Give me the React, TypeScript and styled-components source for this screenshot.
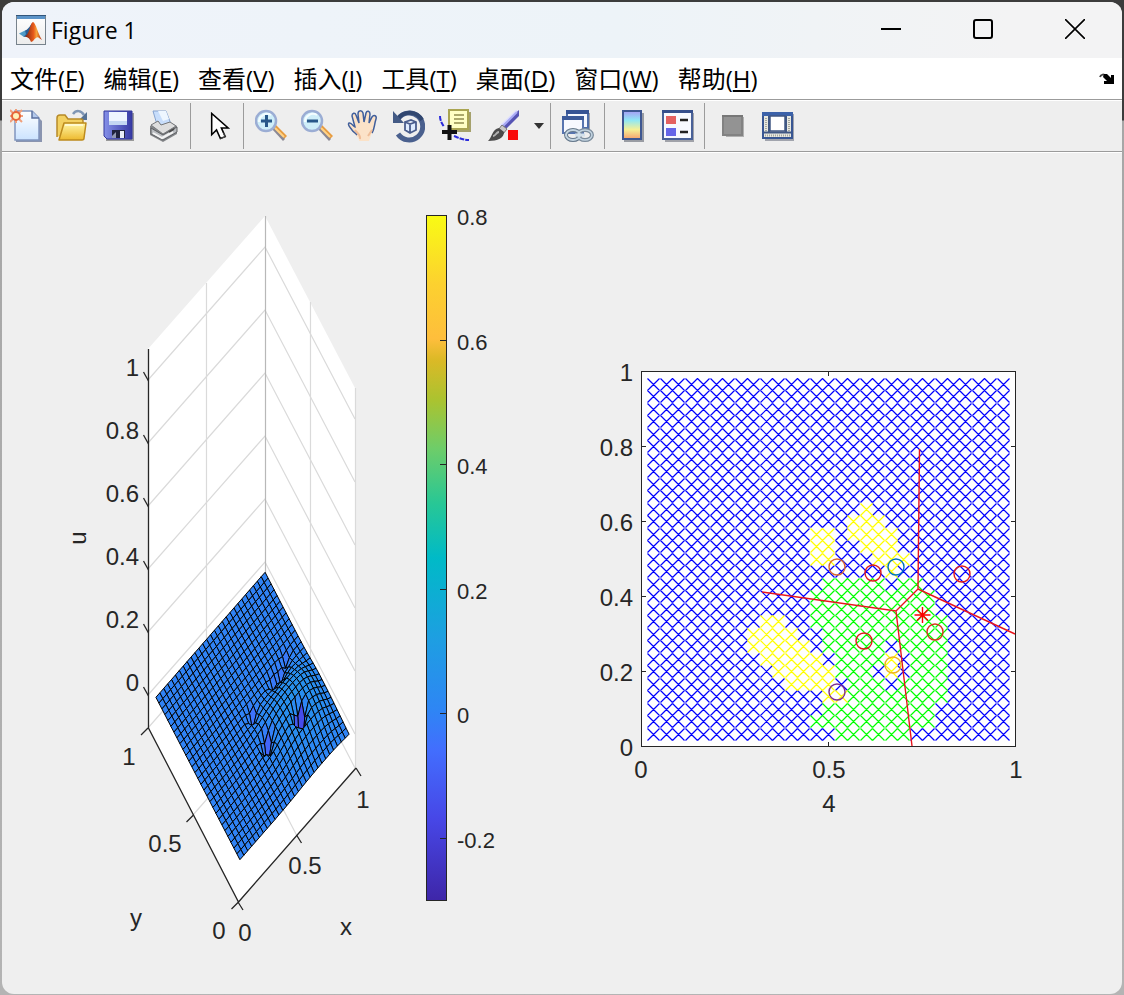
import React from "react";
import styled, { createGlobalStyle } from "styled-components";

const GlobalStyle = createGlobalStyle`
  * { box-sizing: border-box; }
  body {
    margin: 0;
    background: linear-gradient(#3c3c3c 0, #3c3c3c 120px, #a6a6a6 121px, #b4b4b4 100%);
    font-family: "Open Sans", "Noto Sans CJK SC", sans-serif;
    color: #000;
  }
`;

const Desktop = styled.div`
  min-height: 100vh;
  padding: 2px 2px 1px;
`;

const Window = styled.main`
  display: flex;
  flex-direction: column;
  overflow: hidden;
  min-height: calc(100vh - 3px);
  border-radius: 12px;
  background: #efefef;
`;

const TitleBar = styled.header`
  display: flex;
  align-items: center;
  height: 56px;
  padding: 0 1px 0 14px;
  background: linear-gradient(90deg, #eff3fa, #edf3f8 55%, #f3f3f4 90%);
`;

const Title = styled.h1`
  flex: 1;
  margin: 0 0 0 4px;
  font-size: 23px;
  line-height: 30px;
  font-weight: 400;
`;

const plainButton = `
  display: flex;
  align-items: center;
  justify-content: center;
  padding: 0;
  border: 0;
  background: none;
  color: inherit;
`;

const CaptionButton = styled.button`
  ${plainButton}
  width: 92px;
  height: 56px;
  padding-bottom: 2px;
`;

const MenuBar = styled.nav`
  display: flex;
  align-items: center;
  gap: 19px;
  height: 42px;
  padding: 0 7px 0 8px;
  background: #fff;
  border-bottom: 1px solid #9b9b9b;
`;

const MenuItem = styled.button`
  ${plainButton}
  display: block;
  font: 24px/34px "Open Sans", "Noto Sans CJK SC", sans-serif;
  white-space: nowrap;
`;

const DockButton = styled.button`
  ${plainButton}
  margin-left: auto;
`;

const ToolBar = styled.div`
  display: flex;
  align-items: center;
  height: 52px;
  background: #eee;
  border-top: 1px solid #fff;
  border-bottom: 1px solid #9b9b9b;
`;

const Group = styled.div<{ $first?: boolean; $tight?: boolean; $last?: boolean }>`
  display: flex;
  align-items: center;
  gap: 14px;
  height: 46px;
  padding: 0 ${(p) => (p.$tight ? 2 : 10)}px 0 ${(p) => (p.$first ? 8 : 11)}px;
  border-right: ${(p) => (p.$last ? "0" : "1px solid #9b9b9b")};
`;

const Tool = styled.button<{ $width?: number }>`
  ${plainButton}
  justify-content: flex-end;
  width: ${(p) => p.$width ?? 32}px;
  height: 34px;
`;

const Split = styled.div`
  display: flex;
`;

const DropButton = styled.button`
  ${plainButton}
  width: 28px;
  padding-left: 10px;
`;

const Figure = styled.section`
  display: grid;
  grid-template-columns: 550fr 570fr;
  border-top: 1px solid #fff;
`;

const Plot = styled.svg`
  display: block;
  width: 100%;
  font-family: "Liberation Sans", sans-serif;
  font-size: 24px;
  fill: #262626;
`;

/* ---------- icons ---------- */

const Icon = ({ children }: { children: React.ReactNode }) => (
  <svg width="32" height="34" viewBox="0 0 32 34" fill="none" aria-hidden="true">
    {children}
  </svg>
);

const MatlabIcon = () => (
  <svg width="31" height="31" viewBox="0 0 31 31" aria-hidden="true">
    <defs>
      <linearGradient id="logoPage" x2="0" y2="1">
        <stop stopColor="#fff" />
        <stop offset="1" stopColor="#ececec" />
      </linearGradient>
      <linearGradient id="logoPeak">
        <stop stopColor="#7b2312" />
        <stop offset=".5" stopColor="#e85a1c" />
        <stop offset=".68" stopColor="#f6a13a" />
        <stop offset="1" stopColor="#b52a12" />
      </linearGradient>
    </defs>
    <rect x=".5" y=".5" width="29" height="29" fill="url(#logoPage)" stroke="#77828c" />
    <path d="M1 1h28v3H1z" fill="#5b93c8" />
    <path d="M0 .5h30" stroke="#32557b" />
    <path d="M3 18.500l6-3 3 2 -4 4.500z" fill="#4f9bc7" />
    <path d="M9 15.500c4-1 5-6 8-8l-3 9-3 5-3.500.5 2.500-3z" fill="#285e96" />
    <path d="M17 7c3 1 5 12 9 18-3-2-4-4-6-2-2 1-3 4-5 4-1-3-3-5-6-5.500 5-3 5-14 8-14.500z" fill="url(#logoPeak)" />
  </svg>
);

const NewIcon = () => (
  <Icon>
    <defs>
      <linearGradient id="newPage" x2="0" y2="1">
        <stop stopColor="#fff" />
        <stop offset="1" stopColor="#cbe3ff" />
      </linearGradient>
    </defs>
    <path d="M6 4h18l8 8v21H6z" fill="#68769a" opacity=".75" />
    <path d="M5 2h17l7 7v22H5z" fill="url(#newPage)" stroke="#8095be" strokeWidth="1.500" />
    <path d="M22 2v7h7" fill="#b4c9ec" stroke="#5b709e" strokeWidth="1.500" />
    <path d="M0 1l12 12M12 1L0 13M6 0v14M0 7h13" stroke="#f0a07c" strokeWidth="2" />
    <circle cx="6" cy="7" r="4" fill="#fff2ba" stroke="#e6653a" strokeWidth="2" />
  </Icon>
);

const OpenIcon = () => (
  <Icon>
    <defs>
      <linearGradient id="folder" x2="0" y2="1">
        <stop stopColor="#fff6a6" />
        <stop offset="1" stopColor="#edb92e" />
      </linearGradient>
    </defs>
    <path d="M17 5c3-4 8-4 11 1" stroke="#7f96b5" strokeWidth="2.500" />
    <path d="M31 3v8h-8z" fill="#567295" />
    <path d="M1 28V9q0-3 3-3h5l3 4h13q2 0 2 2v6" fill="#f3d161" stroke="#b78a28" strokeWidth="1.500" />
    <path d="M8 14h22l-2 15q0 2-2 2H3z" fill="url(#folder)" stroke="#bd8b1d" strokeWidth="1.500" strokeLinejoin="round" />
    <path d="M9 16h18" stroke="#fffce0" strokeWidth="1.500" />
  </Icon>
);

const SaveIcon = () => (
  <Icon>
    <defs>
      <linearGradient id="disk">
        <stop stopColor="#8590e8" />
        <stop offset="1" stopColor="#3639a4" />
      </linearGradient>
    </defs>
    <path d="M4 4h28v28H4z" fill="#999" />
    <path d="M2 2h28v28H5l-3-3z" fill="url(#disk)" stroke="#35389c" />
    <path d="M7 3h18v12H7z" fill="#eef4ff" />
    <path d="M7 12h18v4H7z" fill="#c4d7f3" />
    <path d="M10 21h13v8H10z" fill="#20233f" />
    <path d="M18 22h4v7h-4z" fill="#e9edf8" />
    <path d="M10 27l4-4v6h-4z" fill="#929ab5" />
  </Icon>
);

const PrintIcon = () => (
  <Icon>
    <path d="M5 2h13l5 13-13 4z" fill="#c7ddfb" stroke="#86a3cf" />
    <path d="M10 2h8l3 8-6 2z" fill="#eef6ff" />
    <path d="M2 17l8-5 3 4 9-3 7 4v8L15 33 2 26z" fill="#85878a" />
    <path d="M3 16l7-4 3 4 9-3 6 4-13 8z" fill="#dedede" stroke="#77797c" />
    <path d="M3 19l12 7 14-8v5l-14 8-12-6z" fill="#b9bcc0" stroke="#5e6063" />
    <path d="M5 24l9 5 11-6" stroke="#f3f3f3" strokeWidth="2" />
    <path d="M21 23l5-3" stroke="#4b4b4b" strokeWidth="2" />
  </Icon>
);

const PointerIcon = () => (
  <Icon>
    <path
      d="M10 4v22l5-5 4 9 5-2-4-9h7z"
      fill="#fff"
      stroke="#000"
      strokeWidth="1.600"
    />
    <path d="M22 24l2 4-5 2" stroke="#555" />
  </Icon>
);

const ZoomIcon = ({ plus }: { plus?: boolean }) => (
  <Icon>
    <path d="M18 19l3-3 11 11-4 4z" fill="#e79b3f" />
    <path d="M17 20l2-1 11 11-2 2z" fill="#8c8994" />
    <path d="M20 19l9 9" stroke="#ffd286" strokeWidth="2" />
    <circle cx="11" cy="12" r="10" fill="#cfeef9" stroke="#9badd4" strokeWidth="2.500" />
    <path d="M4 13a8 8 0 0 1 12-7" stroke="#f4fdff" strokeWidth="2" />
    <path d="M6 12h11" stroke="#285789" strokeWidth="3" />
    {plus && <path d="M11.500 6v12" stroke="#285789" strokeWidth="3" />}
  </Icon>
);

const HandIcon = () => (
  <Icon>
    <path
      d="M12 32c0-5-5-6-7-10-2-3-5-6-3-8 3-1 4 4 6 4L5 7c0-3 3-4 4-1l3 8-1-9c0-4 4-4 5-1l1 9 2-9c1-3 4-2 4 1l-1 9 3-6c2-3 5-1 4 2-2 6-1 11-5 16l-2 6z"
      fill="#fbe2c8"
    />
    <path
      d="M10 26c-2-3-4-3-5-5-2-3-5-5-3-7 3-1 4 4 6 4L5 7c0-3 3-4 4-1l3 8-1-9c0-4 4-4 5-1l1 9 2-9c1-3 4-2 4 1l-1 9 3-6c2-3 5-1 4 2-2 6-1 9-4 14"
      stroke="#405f9c"
      strokeWidth="1.500"
    />
    <path d="M13 30c1-4-3-6-5-9M21 27l4-6" stroke="#efbd98" strokeWidth="2" />
  </Icon>
);

const RotateIcon = () => (
  <Icon>
    <path d="M5 10A13.500 13.500 0 1 1 5 25" stroke="#4a608e" strokeWidth="5" />
    <path d="M5 10A14 14 0 0 1 29 11" stroke="#30466f" strokeWidth="4" />
    <path d="M0 2v12h11z" fill="#435a85" />
    <path d="M12 13l6-2 5 2v8l-6 3-5-3zM12 13l5 2 6-2M17 15v8" fill="#dfecff" stroke="#4a5d8d" strokeWidth="1.800" />
  </Icon>
);

const DataTipIcon = () => (
  <Icon>
    <path d="M13 3h19v20H13z" fill="#a5a16c" />
    <path d="M10 1h19v19H10z" fill="#ffffc4" stroke="#aaa552" strokeWidth="2" />
    <path d="M15 6h10M15 10h10M15 14h10" stroke="#918d4e" strokeWidth="1.500" />
    <path d="M1 7c0 5 2 7 4 11M15 27c5 2 9 4 15 4" stroke="#2b2bdc" strokeWidth="2" strokeDasharray="5 1" />
    <path d="M3 23h15M10.500 16v15" stroke="#111" strokeWidth="4" />
  </Icon>
);

const BrushIcon = () => (
  <Icon>
    <path d="M30 1l-16 17-2-2L28 1z" fill="#dedfff" />
    <path d="M31 1v6L18 20l-4-3z" fill="#5654b4" />
    <path d="M29 3L15 17" stroke="#a9abf5" strokeWidth="2" />
    <path d="M14 16l5 4-4 5-5-4z" fill="#c8c8c8" stroke="#777" />
    <path d="M11 19l5 4c0 6-6 9-16 9 4-3 4-12 11-13z" fill="#4b4b4b" />
    <path d="M5 27c3 0 3-4 6-4" stroke="#b1b1b1" strokeWidth="2" />
    <path d="M20 21h10v10H20z" fill="#f90a0a" />
  </Icon>
);

const LinkIcon = () => (
  <Icon>
    <path d="M6 4h22v17H6z" fill="#9c9fa8" />
    <path d="M5 2h21v17H5z" fill="#f4f7ff" stroke="#4e6da9" strokeWidth="2" />
    <path d="M4 1h23v4H4z" fill="#355395" />
    <path d="M1 8h20v16H1z" fill="#f7f9ff" stroke="#5875b0" strokeWidth="2" />
    <path d="M0 7h22v4H0z" fill="#3b5999" />
    <ellipse cx="11" cy="26" rx="7" ry="5" stroke="#65788b" strokeWidth="4" />
    <ellipse cx="23" cy="26" rx="7" ry="5" stroke="#7b8c9c" strokeWidth="4" />
    <ellipse cx="11" cy="26" rx="7" ry="5" stroke="#c4d5e2" strokeWidth="2" />
    <ellipse cx="23" cy="26" rx="7" ry="5" stroke="#c4d5e2" strokeWidth="1.500" />
    <path d="M13 26h10" stroke="#d2e0ea" strokeWidth="3" />
  </Icon>
);

const ColorbarIcon = () => (
  <Icon>
    <defs>
      <linearGradient id="rainbow" x2="0" y2="1">
        <stop stopColor="#a69cf4" />
        <stop offset=".33" stopColor="#8fe8f5" />
        <stop offset=".66" stopColor="#f5f196" />
        <stop offset="1" stopColor="#f7a06e" />
      </linearGradient>
    </defs>
    <path d="M8 4h20v29H8z" fill="#999ca3" />
    <path d="M7 2h18v28H7z" fill="url(#rainbow)" stroke="#3e5792" strokeWidth="2" />
  </Icon>
);

const LegendIcon = () => (
  <Icon>
    <path d="M3 4h29v29H3z" fill="#a0a2a9" />
    <path d="M1 2h29v28H1z" fill="#f7f9ff" stroke="#496198" strokeWidth="2" />
    <path d="M0 1h31v3H0z" fill="#364f8c" />
    <path d="M4 7h10v8H4z" fill="#e46161" />
    <path d="M4 19h10v8H4z" fill="#6565e8" />
    <path d="M18 11h8M18 23h8" stroke="#222" strokeWidth="2.500" />
  </Icon>
);

const HideToolsIcon = () => (
  <Icon>
    <path d="M10 8h18v20H10z" fill="#b0b0b0" />
    <path d="M7 7h19v19H7z" fill="#939393" stroke="#828282" strokeWidth="2" />
    <path d="M6 7h21" stroke="#777" strokeWidth="2" />
  </Icon>
);

const DockToolsIcon = () => (
  <Icon>
    <path d="M3 5h29v27H3z" fill="#a1a4ad" />
    <path d="M1 4h29v25H1z" fill="#e8e8e0" stroke="#385693" strokeWidth="2" />
    <path d="M0 3h31v4H0z" fill="#3c62a9" />
    <path d="M7 7v16M24 7v16M2 23.500h27" stroke="#405783" strokeWidth="2" />
    <path d="M8 7h15v15H8z" fill="#fff" stroke="#405783" strokeWidth="1.500" />
    <path d="M4 9v14M27 9v14M3 26.500h25" stroke="#a5a79e" strokeWidth="2" strokeDasharray="1 1" />
  </Icon>
);

/* ---------- surface plot ---------- */

const PARULA: [number, number[]][] = [
  [0, [62, 38, 168]],
  [0.12, [71, 71, 231]],
  [0.22, [66, 110, 254]],
  [0.28, [46, 134, 244]],
  [0.38, [30, 158, 226]],
  [0.5, [0, 186, 199]],
  [0.58, [40, 199, 149]],
  [0.66, [110, 205, 105]],
  [0.73, [170, 195, 48]],
  [0.79, [220, 185, 38]],
  [0.82, [254, 190, 60]],
  [0.9, [252, 209, 47]],
  [1, [249, 251, 20]],
];

const rgb = (c: number[]) => `rgb(${c.map(Math.round).join(",")})`;

function parula(t: number) {
  const v = Math.max(0, Math.min(1, t));
  const k = Math.max(1, PARULA.findIndex(([s]) => s >= v));
  const [a, ca] = PARULA[k - 1];
  const [b, cb] = PARULA[k];
  const f = (v - a) / (b - a);
  return rgb(ca.map((c, i) => c + (cb[i] - c) * f));
}

const N = 30;
const gauss = (x: number, y: number, cx: number, cy: number, s: number) =>
  Math.exp(-((x - cx) ** 2 + (y - cy) ** 2) / (2 * s * s));
const step = (v: number, width: number) => 1 / (1 + Math.exp(-v / width));

/* Centre in grid steps, radius, depth. */
const PITS = [
  [22, 8, 0.019, 0.19],
  [21, 8, 0.016, 0.12],
  [15, 10, 0.022, 0.1],
  [15, 15, 0.02, 0.05],
  [21, 16, 0.022, 0.03],
  [23, 16, 0.022, 0.04],
  [25, 17, 0.022, 0.03],
];

function height(x: number, y: number) {
  const hill =
    0.06 * step(0.46 - y, 0.035) * step(y - 0.14, 0.06) * step(x - 0.55, 0.06) * step(0.91 - x, 0.035);
  return PITS.reduce((z, [i, j, s, a]) => z - a * gauss(x, y, i / N, j / N, s), hill);
}

const project = (x: number, y: number, z: number) => [
  239 + 117 * x - 90 * y,
  870 - 134 * x - 174 * y - 314 * z,
];

const faces: { points: string; fill: string }[] = [];
for (let s = 2 * N - 4; s >= 2; s--) {
  for (let i = 1; i < N - 1; i++) {
    const j = s - i;
    if (j < 1 || j >= N - 1) continue;
    const corners = [[i, j], [i + 1, j], [i + 1, j + 1], [i, j + 1]].map(([a, b]) => [a / N, b / N]);
    faces.push({
      points: corners.map(([x, y]) => project(x, y, height(x, y)).map((v) => v.toFixed(1)).join()).join(" "),
      fill: parula((height(corners[0][0], corners[0][1]) + 0.3) / 1.1),
    });
  }
}

const LEVELS = ["1", "0.8", "0.6", "0.4", "0.2", "0"];

const SurfacePlot = () => (
  <Plot viewBox="2 153 550 840" role="img" aria-label="Surface of u over x and y">
    <defs>
      <linearGradient id="parula" x1="0" y1="1" x2="0" y2="0">
        {PARULA.map(([s, c]) => (
          <stop key={s} offset={s} stopColor={rgb(c)} />
        ))}
      </linearGradient>
    </defs>
    <path d="M265 216L355 388V768L238 902L148 728V349Z" fill="#fff" />
    <g fill="none" stroke="#dadada" strokeWidth="1.200">
      {LEVELS.map((l, k) => (
        <path key={l} d={`M148 ${380 + 63 * k}L265 ${247 + 63 * k}L355 ${419 + 63 * k}`} />
      ))}
      <path d="M206.500 283V661L296.500 835M310.500 302V681L193 815M355.500 388V768M148 728L265 594L355 768" />
      <path d="M265.500 216V594" stroke="#b8b8b8" />
    </g>
    <g stroke="#000" strokeLinejoin="round">
      {faces.map((f, k) => (
        <polygon key={k} points={f.points} fill={f.fill} />
      ))}
    </g>
    <g fill="none" stroke="#262626" strokeWidth="1.300">
      <path d="M148.500 349V728L238.500 902L356 768" />
      {LEVELS.map((l, k) => (
        <path key={l} d={`M148.500 ${381 + 63 * k}l-5-9`} />
      ))}
      <path d="M148 728l-7 7M193.500 815l-7 7M238.500 902l-7 7M238 902l5 8M296.500 835l5 8M356 768l5 8" />
    </g>
    <g textAnchor="end">
      {LEVELS.map((l, k) => (
        <text key={l} x="139" y={376 + 63 * k}>{l}</text>
      ))}
    </g>
    <g textAnchor="middle">
      <text transform="translate(86 538) rotate(-90)">u</text>
      <text x="129" y="765">1</text>
      <text x="165" y="852">0.5</text>
      <text x="219" y="939">0</text>
      <text x="245" y="941">0</text>
      <text x="305" y="874">0.5</text>
      <text x="363" y="808">1</text>
      <text x="136" y="926">y</text>
      <text x="346" y="935">x</text>
    </g>
    <rect x="426.500" y="215.500" width="20" height="685" fill="url(#parula)" stroke="#262626" />
    <g fontSize="22">
      {["0.8", "0.6", "0.4", "0.2", "0", "-0.2"].map((l, k) => (
        <React.Fragment key={l}>
          <path d={`M440 ${Math.round(215 + 124.6 * k) + 0.5}h6`} stroke="#262626" />
          <text x="457" y={225 + Math.round(124.6 * k)}>{l}</text>
        </React.Fragment>
      ))}
    </g>
  </Plot>
);

/* ---------- scatter plot ---------- */

type Span = [number, number];
/* Column spans per grid row, counted from the bottom. */
const GREEN: Record<number, Span[]> = {
  1: [[16, 21]], 2: [[14, 23]], 3: [[15, 23]], 4: [[17, 24]],
  5: [[17, 19], [21, 24]], 6: [[16, 18], [22, 24]], 7: [[16, 19], [22, 24]],
  8: [[15, 19], [21, 24]], 9: [[15, 24]], 10: [[14, 24]], 11: [[14, 23]],
  12: [[14, 23]], 13: [[15, 19], [21, 22]],
};
const YELLOW: Record<number, Span[]> = {
  4: [[15, 16]], 5: [[12, 15]], 6: [[11, 15], [20, 20]], 7: [[10, 14], [20, 20]],
  8: [[9, 13]], 9: [[9, 12]], 10: [[10, 11]], 14: [[20, 20]],
  15: [[14, 15], [19, 21]], 16: [[14, 15], [18, 20]], 17: [[14, 15], [17, 20]],
  18: [[17, 19]], 19: [[18, 18]],
};
const inside = (spans: Span[] | undefined, i: number) => !!spans?.some(([a, b]) => i >= a && i <= b);

const crosses = { "#0000ff": "", "#00ff00": "", "#ffff00": "" };
for (let j = 1; j < N; j++) {
  for (let i = 1; i < N; i++) {
    const color = inside(YELLOW[j], i) ? "#ffff00" : inside(GREEN[j], i) ? "#00ff00" : "#0000ff";
    const x = Math.round(641 + 12.48 * i) + 0.5;
    const y = Math.round(746 - 12.5 * j) + 0.5;
    crosses[color] += `M${x - 6} ${y - 6}l12 12M${x + 6} ${y - 6}l-12 12`;
  }
}

const CIRCLES: [number, number, string][] = [
  [837, 567, "#d9672f"], [873, 573, "#e01a1a"], [896, 567, "#0072bd"], [962, 574, "#e01a1a"],
  [864, 641, "#e01a1a"], [935, 632, "#d9341a"], [893, 665, "#edb120"], [837, 692, "#7e2f8e"],
];

const ScatterPlot = () => (
  <Plot viewBox="552 153 570 840" role="img" aria-label="Classified grid points with node positions">
    <rect x="641.500" y="371.500" width="374" height="375" fill="#fff" />
    <g fill="none" strokeWidth="1.200">
      {Object.entries(crosses).map(([color, d]) => (
        <path key={color} d={d} stroke={color} />
      ))}
    </g>
    <g fill="none" stroke="#262626">
      <rect x="641.500" y="371.500" width="374" height="375" />
      {[1, 2, 3, 4].map((k) => (
        <path key={k} d={`M642 ${746.5 - 75 * k}h4M1015 ${746.5 - 75 * k}h-4`} />
      ))}
      <path d="M828.500 746v-4M828.500 372v4" />
    </g>
    <g fill="none" stroke="#e8141c" strokeWidth="1.400">
      <path d="M762 592L896 611L918 589L919.500 449M918 589L1015 634M896 611L912 746" />
      <path d="M922.500 607v16M914.500 615h16M917 609.500l11 11M928 609.500l-11 11" stroke="#f00" />
      {CIRCLES.map(([cx, cy, color]) => (
        <circle key={`${cx}-${cy}`} cx={cx} cy={cy} r="8" stroke={color} />
      ))}
    </g>
    <g textAnchor="end">
      {LEVELS.map((l, k) => (
        <text key={l} x="633" y={381 + 75 * k}>{l}</text>
      ))}
    </g>
    <g textAnchor="middle">
      <text x="641" y="778">0</text>
      <text x="829" y="778">0.5</text>
      <text x="1016" y="778">1</text>
      <text x="829" y="812">4</text>
    </g>
  </Plot>
);

/* ---------- window ---------- */

const MENUS = [
  ["文件", "F"], ["编辑", "E"], ["查看", "V"], ["插入", "I"],
  ["工具", "T"], ["桌面", "D"], ["窗口", "W"], ["帮助", "H"],
];

export default function App() {
  return (
    <>
      <GlobalStyle />
      <Desktop>
        <Window>
          <TitleBar>
            <MatlabIcon />
            <Title>Figure 1</Title>
            <CaptionButton aria-label="Minimize">
              <svg width="20" height="20" stroke="#000" strokeWidth="2"><path d="M0 10h20" /></svg>
            </CaptionButton>
            <CaptionButton aria-label="Maximize">
              <svg width="20" height="20" fill="none" stroke="#000" strokeWidth="2"><rect x="1" y="1" width="18" height="18" rx="2" /></svg>
            </CaptionButton>
            <CaptionButton aria-label="Close">
              <svg width="20" height="20" stroke="#000" strokeWidth="1.600"><path d="M0 0l20 20M20 0L0 20" /></svg>
            </CaptionButton>
          </TitleBar>
          <MenuBar>
            {MENUS.map(([name, key]) => (
              <MenuItem key={key}>
                {name}(<u>{key}</u>)
              </MenuItem>
            ))}
            <DockButton aria-label="Dock figure">
              <svg width="16" height="14" viewBox="0 0 16 14">
                <path d="M1 5c1-3 4-3 6-1" fill="none" stroke="#444" strokeWidth="2" />
                <path d="M5 2h3l4 4V3h3v9H5V9h3L4 5z" fill="#000" />
              </svg>
            </DockButton>
          </MenuBar>
          <ToolBar role="toolbar">
            <Group $first>
              <Tool aria-label="New"><NewIcon /></Tool>
              <Tool aria-label="Open"><OpenIcon /></Tool>
              <Tool aria-label="Save"><SaveIcon /></Tool>
              <Tool aria-label="Print"><PrintIcon /></Tool>
            </Group>
            <Group>
              <Tool $width={31} aria-label="Select"><PointerIcon /></Tool>
            </Group>
            <Group $tight>
              <Tool aria-label="Zoom in"><ZoomIcon plus /></Tool>
              <Tool aria-label="Zoom out"><ZoomIcon /></Tool>
              <Tool aria-label="Pan"><HandIcon /></Tool>
              <Tool aria-label="Rotate"><RotateIcon /></Tool>
              <Tool aria-label="Data cursor"><DataTipIcon /></Tool>
              <Split>
                <Tool $width={35} aria-label="Brush"><BrushIcon /></Tool>
                <DropButton aria-label="Brush colors">
                  <svg width="10" height="6"><path d="M0 0h10l-5 6z" fill="#333" /></svg>
                </DropButton>
              </Split>
            </Group>
            <Group>
              <Tool aria-label="Link plot"><LinkIcon /></Tool>
            </Group>
            <Group>
              <Tool aria-label="Insert colorbar"><ColorbarIcon /></Tool>
              <Tool aria-label="Insert legend"><LegendIcon /></Tool>
            </Group>
            <Group $last>
              <Tool aria-label="Hide plot tools"><HideToolsIcon /></Tool>
              <Tool aria-label="Show plot tools"><DockToolsIcon /></Tool>
            </Group>
          </ToolBar>
          <Figure>
            <SurfacePlot />
            <ScatterPlot />
          </Figure>
        </Window>
      </Desktop>
    </>
  );
}
